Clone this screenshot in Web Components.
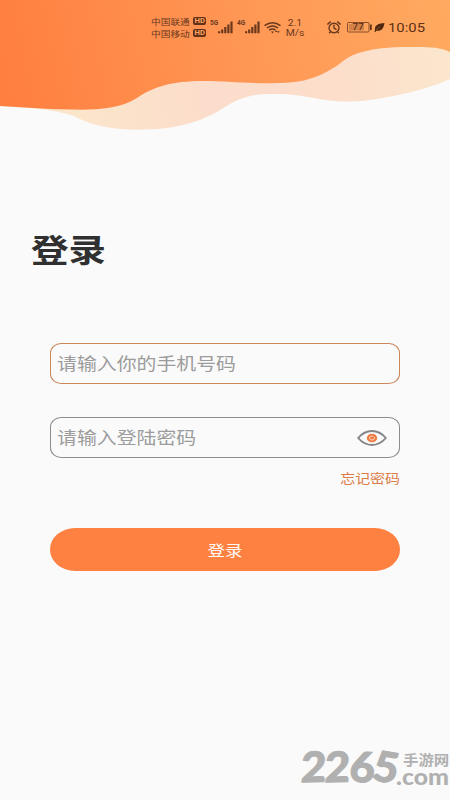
<!DOCTYPE html>
<html lang="zh-CN"><head><meta charset="utf-8"><title>登录</title>
<style>
html,body{margin:0;width:450px;height:800px;overflow:hidden;background:#fafafa;font-family:Roboto,"Noto Sans CJK SC",sans-serif}
</style></head><body>
<login-page></login-page>
<script>
const define=(name,html)=>{
  const t=document.createElement('template');t.innerHTML=html;
  customElements.define(name,class extends HTMLElement{
    constructor(){super();this.attachShadow({mode:'open'}).append(t.content.cloneNode(true));}
  });
};
define('wide-text',`<style>:host{display:inline-block;white-space:nowrap;transform:scaleX(var(--sx,1.17));transform-origin:left center}</style><slot></slot>`);

define('signal-bars',`<style>:host{display:flex;align-items:flex-start;width:23px;height:14px;color:#6b391d}
b{font:700 6.5px/7px Roboto,sans-serif;width:8px;margin-top:0}svg{margin-top:1px}</style>
<b><slot></slot></b><svg width="15" height="13" viewBox="0 0 15 13" fill="currentColor"><path d="M0 10.3h2.2v2H0zM3.1 8.5h2.200v3.8h-2.200zM6.2 6h2.200v6.3h-2.200zM9.3 3.4h2.200v8.9h-2.200zM12.4.6h2.200v11.7h-2.200z"/></svg>`);

define('carrier-line',`<style>:host{display:flex;height:12px;align-items:center;font:8.5px/12px "Noto Sans CJK SC",sans-serif;color:#6b391d}
wide-text{width:42px;--sx:1.14}i{width:13px;height:8px;border-radius:2px;background:#623016;color:#ffa365;font:700 7px/8.5px Roboto,sans-serif;text-align:center}
i wide-text{width:auto;--sx:1.1;transform-origin:center}</style><wide-text><slot></slot></wide-text><i><wide-text>HD</wide-text></i>`);

define('battery-level',`<style>:host{display:grid;width:25px;height:11px;color:#6b391d}svg,span{grid-area:1/1}
span{width:22px;text-align:center;font:9px/11px Roboto,sans-serif;transform:scaleX(1.15);color:#4c230d}</style>
<svg width="25" height="11"><rect x=".5" y=".5" width="21.5" height="9.5" rx="1" fill="none" stroke="currentColor" stroke-opacity=".8"/><path d="M2 2h15v6.5H2z" fill="#a86435" opacity=".5"/><path d="M23 2.5h1.7v5.5H23z" fill="#623016"/></svg><span><slot></slot></span>`);

define('status-bar',`<style>
:host{display:flex;align-items:flex-start;box-sizing:border-box;padding:15px 0 0 151px;height:45px;color:#6b391d}
:host>*,svg{flex:none}.car{width:55px}.s1{margin:5px 0 0 4px}.s2{margin:5px 0 0 4px}.wifi{margin:7px 0 0 4px}
.speed{width:22px;margin:3px 0 0 3px;text-align:center;font:9px/10px Roboto,sans-serif}.speed wide-text{display:block;transform-origin:center;--sx:1.15}
.alarm{margin:6px 0 0 21px}battery-level{margin:7px 0 0 6px}.leaf{margin:7px 0 0 2px}.time{margin:4px 0 0 3px;font:13.500px/16px Roboto,sans-serif;--sx:1.1;color:#603116}
</style>
<div class="car"><carrier-line>中国联通</carrier-line><carrier-line>中国移动</carrier-line></div>
<signal-bars class="s1">5G</signal-bars><signal-bars class="s2">4G</signal-bars>
<svg class="wifi" width="17" height="12" viewBox="0 0 17 12" fill="none" stroke="currentColor" stroke-width="1.5"><path d="M.5 3.7Q8.5-2.1 16.5 3.7M2.9 6Q8.5 1.8 14 6M5.2 8.2Q8.5 5.8 11.5 8.1"/><path d="M7 9.4h3l-1.5 2zM11 10l1.2-1.7L13.4 10zM13 9.3h2.7L14.4 11z" fill="currentColor" stroke="none"/></svg>
<div class="speed"><wide-text>2.1</wide-text><wide-text>M/s</wide-text></div>
<svg class="alarm" width="14" height="13" viewBox="0 0 14 13" fill="none" stroke="currentColor" stroke-width="1.4" stroke-linecap="round"><ellipse cx="7" cy="7" rx="5" ry="4.7"/><path d="M.8 3.1 3.4.9M13.2 3.1 10.6.9M7 4.2V7l2 1.3M3.5 10.8l-1 1M10.5 10.8l1 1"/></svg>
<battery-level>77</battery-level>
<svg class="leaf" width="11" height="11" viewBox="0 0 11 11"><path d="M1 8C.2 3 5 1.2 10.500 1 9.500 7 7 9.500 2.600 8.700L1.200 10 .4 9.500z" fill="#4e2810"/><path d="M2 8.200 6 4.700" stroke="#c87841" stroke-width=".5"/></svg>
<wide-text class="time">10:05</wide-text>`);

define('wave-header',`<style>:host{display:grid;width:450px;height:135px}svg,div{grid-area:1/1}div{align-self:start}svg{display:block}</style>
<svg width="450" height="135" viewBox="0 0 450 135"><defs>
<linearGradient id="g" gradientUnits="userSpaceOnUse" x1="0" y1="60" x2="440" y2="-30"><stop stop-color="#ff7f40"/><stop offset=".5" stop-color="#ff9553"/><stop offset="1" stop-color="#ffaa60"/></linearGradient>
<linearGradient id="a" gradientUnits="userSpaceOnUse" x1="80" y1="120" x2="210" y2="80"><stop stop-color="#fbe5cb"/><stop offset="1" stop-color="#fcdccb"/></linearGradient>
<linearGradient id="b" gradientUnits="userSpaceOnUse" x1="225" y1="90" x2="450" y2="60"><stop stop-color="#fcdccb"/><stop offset=".5" stop-color="#fcdecb"/><stop offset="1" stop-color="#fbe6cd"/></linearGradient></defs>
<path fill="url(#a)" d="M0 106C33 108 61 110 78 118C100 130 132 130 146 129.500C178 129 204 121 225 107L240 75L190 70L120 95Z"/>
<path fill="url(#b)" d="M225 75L340 50L450 40V79C424 91 377 101 351 101.500C318 102 309 94 276 94C252 93 237 99 225 107Z"/>
<path fill="url(#g)" d="M0 0H450V52C438 46 422 47 407 47C376 47 356 52 346 59C335 67 317 83 279 83C248 84 226 81 204 81C171 81 153 87 137 98C119 110 91 110 70 109.500C43 109 22 107 0 106Z"/></svg>
<div><slot></slot></div>`);

define('eye-icon',`<style>:host{display:block;width:30px;height:18px}svg{display:block}</style>
<svg width="30" height="18" viewBox="0 0 30 18" fill="none"><path d="M1.200 9C9-.3 21-.3 28.800 9C21 18.300 9 18.300 1.200 9Z" stroke="#858589" stroke-width="1.900"/><ellipse cx="15" cy="9" rx="5.200" ry="4.300" fill="#f07a42"/><ellipse cx="15" cy="9" rx="2.500" ry="2" stroke="#fbd6c1" stroke-width="1"/><path d="m16 8 2-1.500" stroke="#f07a42"/></svg>`);

define('input-field',`<style>:host{display:flex;box-sizing:border-box;width:350px;height:41px;border:1px solid var(--line,#8d8d90);border-radius:11px/10px;align-items:center;justify-content:space-between;padding:0 12px 0 5.500px;font:17px/24px "Noto Sans CJK SC",sans-serif;color:#9c9c9c;background:#fafafa}wide-text{margin-top:-2px}</style>
<wide-text><slot></slot></wide-text><slot name="icon"></slot>`);

define('primary-button',`<style>:host{display:block}button{display:block;width:350px;height:43px;border:0;padding:0;border-radius:25px/21.500px;background:#ff8142;color:#fffaf5;font:15px/43px "Noto Sans CJK SC",sans-serif}wide-text{transform-origin:center}</style><button><wide-text><slot></slot></wide-text></button>`);

define('site-mark',`<style>:host{display:flex;width:150px;height:42px;color:#b0b0b0}
.n{width:96px;font:900 42px/36px Lato,sans-serif;letter-spacing:-1px;-webkit-text-stroke:1px #b0b0b0}
.n wide-text{--sx:1.04}.n span{display:inline-block;transform:rotate(-1deg) skewX(-3deg)}.n .six{transform:rotate(4deg)}.n .five{transform:rotate(10deg)}
.r{width:54px;box-sizing:border-box;display:grid;grid-template-rows:18px 18px;padding-top:2px}
.cn{font:700 14px/18px "Noto Sans CJK SC",sans-serif;--sx:1.1;margin-left:6px;height:18px}.com{font:900 23px/16px Lato,sans-serif;--sx:1.08;height:16px;margin-left:-1px}</style>
<div class="n"><wide-text><span>2</span><span>2</span><span class="six">6</span><span class="five">5</span></wide-text></div><div class="r"><wide-text class="cn">手游网</wide-text><wide-text class="com">.com</wide-text></div>`);

define('login-page',`<style>
:host{display:flex;flex-direction:column;width:450px;height:800px;background:#fafafa}
h1{margin:89px 0 0 31px;height:48px;font:700 32px/48px "Noto Sans CJK SC",sans-serif;color:#303030}
form{display:flex;flex-direction:column;margin:71px 50px 0}.phone{--line:#cb875c}.pw{margin-top:33px}
.forgot{align-self:flex-end;margin-top:10px;height:20px;font:13px/20px "Noto Sans CJK SC",sans-serif;color:#dc7c48}.forgot wide-text{transform-origin:right;--sx:1.15}
primary-button{margin-top:40px}site-mark{margin:auto 0 10px 301px}
</style>
<wave-header><status-bar></status-bar></wave-header>
<h1><wide-text>登录</wide-text></h1>
<form><input-field class="phone">请输入你的手机号码</input-field>
<input-field class="pw">请输入登陆密码<eye-icon slot="icon"></eye-icon></input-field>
<div class="forgot"><wide-text>忘记密码</wide-text></div>
<primary-button>登录</primary-button></form>
<site-mark></site-mark>`);
</script></body></html>
